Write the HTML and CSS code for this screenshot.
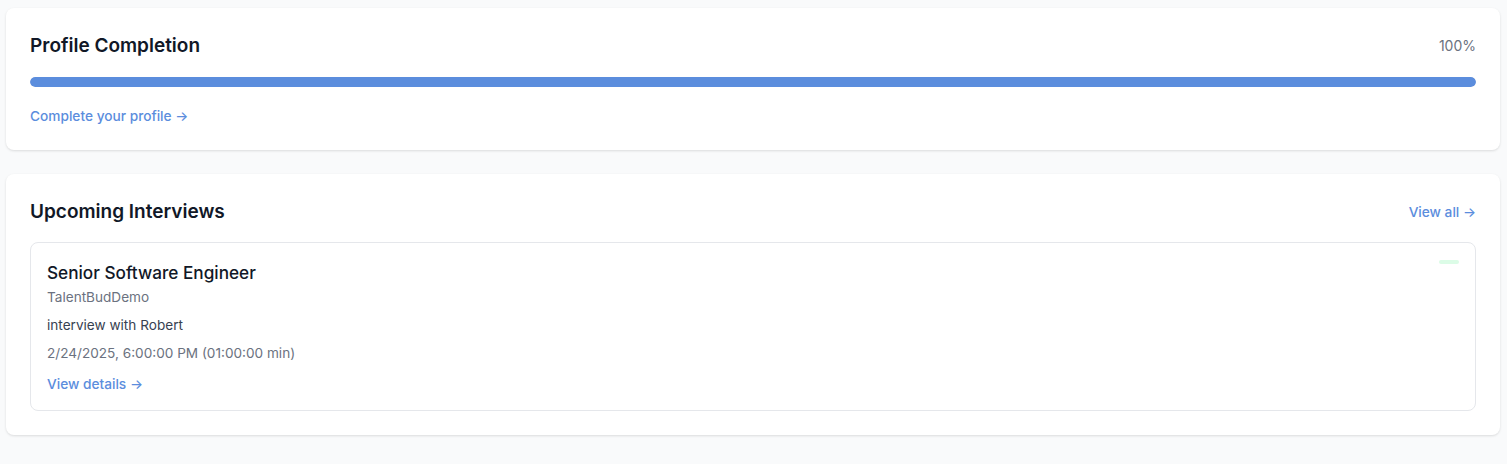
FILE: index.html
```html
<!DOCTYPE html>
<html lang="en">
<head>
<meta charset="utf-8">
<title>Dashboard</title>
<link rel="stylesheet" href="styles.css">
</head>
<body>
<main class="page">
  <section class="card">
    <div class="row">
      <h2 class="card-title">Profile Completion</h2>
      <span class="percent">100%</span>
    </div>
    <div class="bar"><div class="bar-fill" style="width:100%"></div></div>
    <a class="link link-profile" href="#">Complete your profile →</a>
  </section>

  <section class="card">
    <div class="row">
      <h2 class="card-title">Upcoming Interviews</h2>
      <a class="link" href="#">View all →</a>
    </div>
    <div class="interview">
      <div class="interview-head">
        <div class="interview-info">
          <h3 class="job-title">Senior Software Engineer</h3>
          <p class="company">TalentBudDemo</p>
          <p class="desc">interview with Robert</p>
          <p class="time">2/24/2025, 6:00:00 PM (01:00:00 min)</p>
          <a class="link link-details" href="#">View details →</a>
        </div>
        <span class="badge"></span>
      </div>
    </div>
  </section>
</main>
</body>
</html>
```

FILE: styles.css
```css
* { box-sizing: border-box; }
html, body { margin: 0; padding: 0; }
body {
  background: #f9fafb;
  font-family: Inter, "Noto Sans", "Liberation Sans", sans-serif;
  color: #111827;
}
.page {
  padding: 8px 7px 20px 6px;
  display: flex;
  flex-direction: column;
  gap: 24px;
}
.card {
  background: #ffffff;
  border-radius: 8px;
  box-shadow: 0 1px 3px rgba(0,0,0,0.09), 0 1px 2px rgba(0,0,0,0.04);
  padding: 24px;
}
.row {
  display: flex;
  justify-content: space-between;
  align-items: center;
}
.card-title {
  margin: 0;
  font-size: 19px;
  line-height: 28px;
  font-weight: 600;
  color: #111827;
}
.percent {
  font-size: 14px;
  line-height: 20px;
  color: #6b7280;
}
.bar {
  margin-top: 17px;
  height: 10px;
  background: #e5e7eb;
  border-radius: 9999px;
  overflow: hidden;
}
.bar-fill {
  height: 100%;
  background: #5b8ddd;
  border-radius: 9999px;
}
.link {
  display: inline-block;
  font-size: 13.7px;
  line-height: 20px;
  font-weight: 500;
  color: #5b8ddd;
  text-decoration: none;
}
.link-profile { margin-top: 19px; }
.interview {
  margin-top: 16px;
  border: 1px solid #e5e7eb;
  border-radius: 8px;
  padding: 16px;
}
.interview-head {
  display: flex;
  justify-content: space-between;
  align-items: flex-start;
}
.interview-info { display: flex; flex-direction: column; align-items: flex-start; }
.job-title {
  margin: 0;
  font-size: 17.2px;
  line-height: 28px;
  font-weight: 500;
  color: #111827;
}
.company {
  margin: 0;
  font-size: 13.6px;
  line-height: 20px;
  color: #6b7280;
}
.desc {
  margin: 8px 0 0;
  font-size: 13.6px;
  line-height: 20px;
  color: #374151;
}
.time {
  margin: 8px 0 0;
  font-size: 13.6px;
  line-height: 20px;
  color: #6b7280;
}
.link-details { margin-top: 11px; }
.badge {
  display: inline-block;
  width: 20px;
  height: 4px;
  margin-top: 1px;
  margin-right: 0;
  border-radius: 9999px;
  background: #dcfce7;
}
```
